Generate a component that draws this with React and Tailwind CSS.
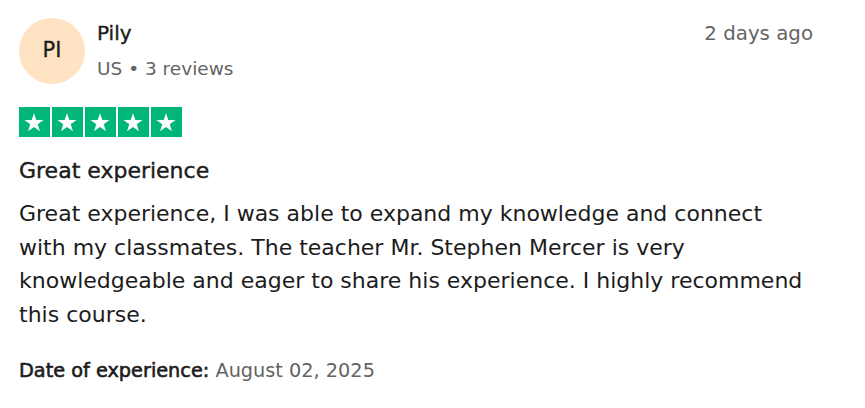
import React from 'react'

function Star() {
    return (
        <div className="w-[30.5px] h-[30px] bg-[#00b67a] flex items-center justify-center">
            <svg viewBox="0 0 24 24" className="w-[22px] h-[22px]" fill="#ffffff">
                <path d="M12 2.5l2.6 7.4h7.8l-6.3 4.6 2.4 7.5L12 17.4l-6.5 4.6 2.4-7.5-6.3-4.6h7.8z" />
            </svg>
        </div>
    )
}

export default function App() {
    const stars = [1, 2, 3, 4, 5];

    return (
        <div className="bg-white w-[865px] h-[408px] pl-[19px] pr-[52px] pt-[18px] font-['DejaVu_Sans',sans-serif] text-[#1c1c1c]">
            <div className="flex justify-between">
                <div className="flex gap-[12px]">
                    <div className="w-[66px] h-[66px] rounded-full bg-[#ffe3c2] flex items-center justify-center text-[21px] [-webkit-text-stroke:0.3px]">
                        PI
                    </div>
                    <div className="flex flex-col">
                        <span className="text-[20px] leading-[30px] [-webkit-text-stroke:0.4px]">Pily</span>
                        <span className="text-[18.5px] text-[#646464] leading-[28px] mt-[7px]">US • 3 reviews</span>
                    </div>
                </div>
                <span className="text-[19.8px] text-[#646464] leading-[30px] mt-[1px]">2 days ago</span>
            </div>

            <div className="flex gap-[2.5px] mt-[23px]">
                {stars.map((s) => (
                    <Star key={s} />
                ))}
            </div>

            <h2 className="text-[22px] leading-[32px] mt-[18px] [-webkit-text-stroke:0.4px]">Great experience</h2>
            <p className="text-[22px] leading-[33.5px] mt-[10px]">
                Great experience, I was able to expand my knowledge and connect with my classmates. The teacher Mr. Stephen Mercer is very knowledgeable and eager to share his experience. I highly recommend this course.
            </p>

            <p className="text-[19.3px] leading-[30px] mt-[25px]">
                <span className="[-webkit-text-stroke:0.6px]">Date of experience:</span>{' '}
                <span className="text-[#646464]">August 02, 2025</span>
            </p>
        </div>
    )
}
